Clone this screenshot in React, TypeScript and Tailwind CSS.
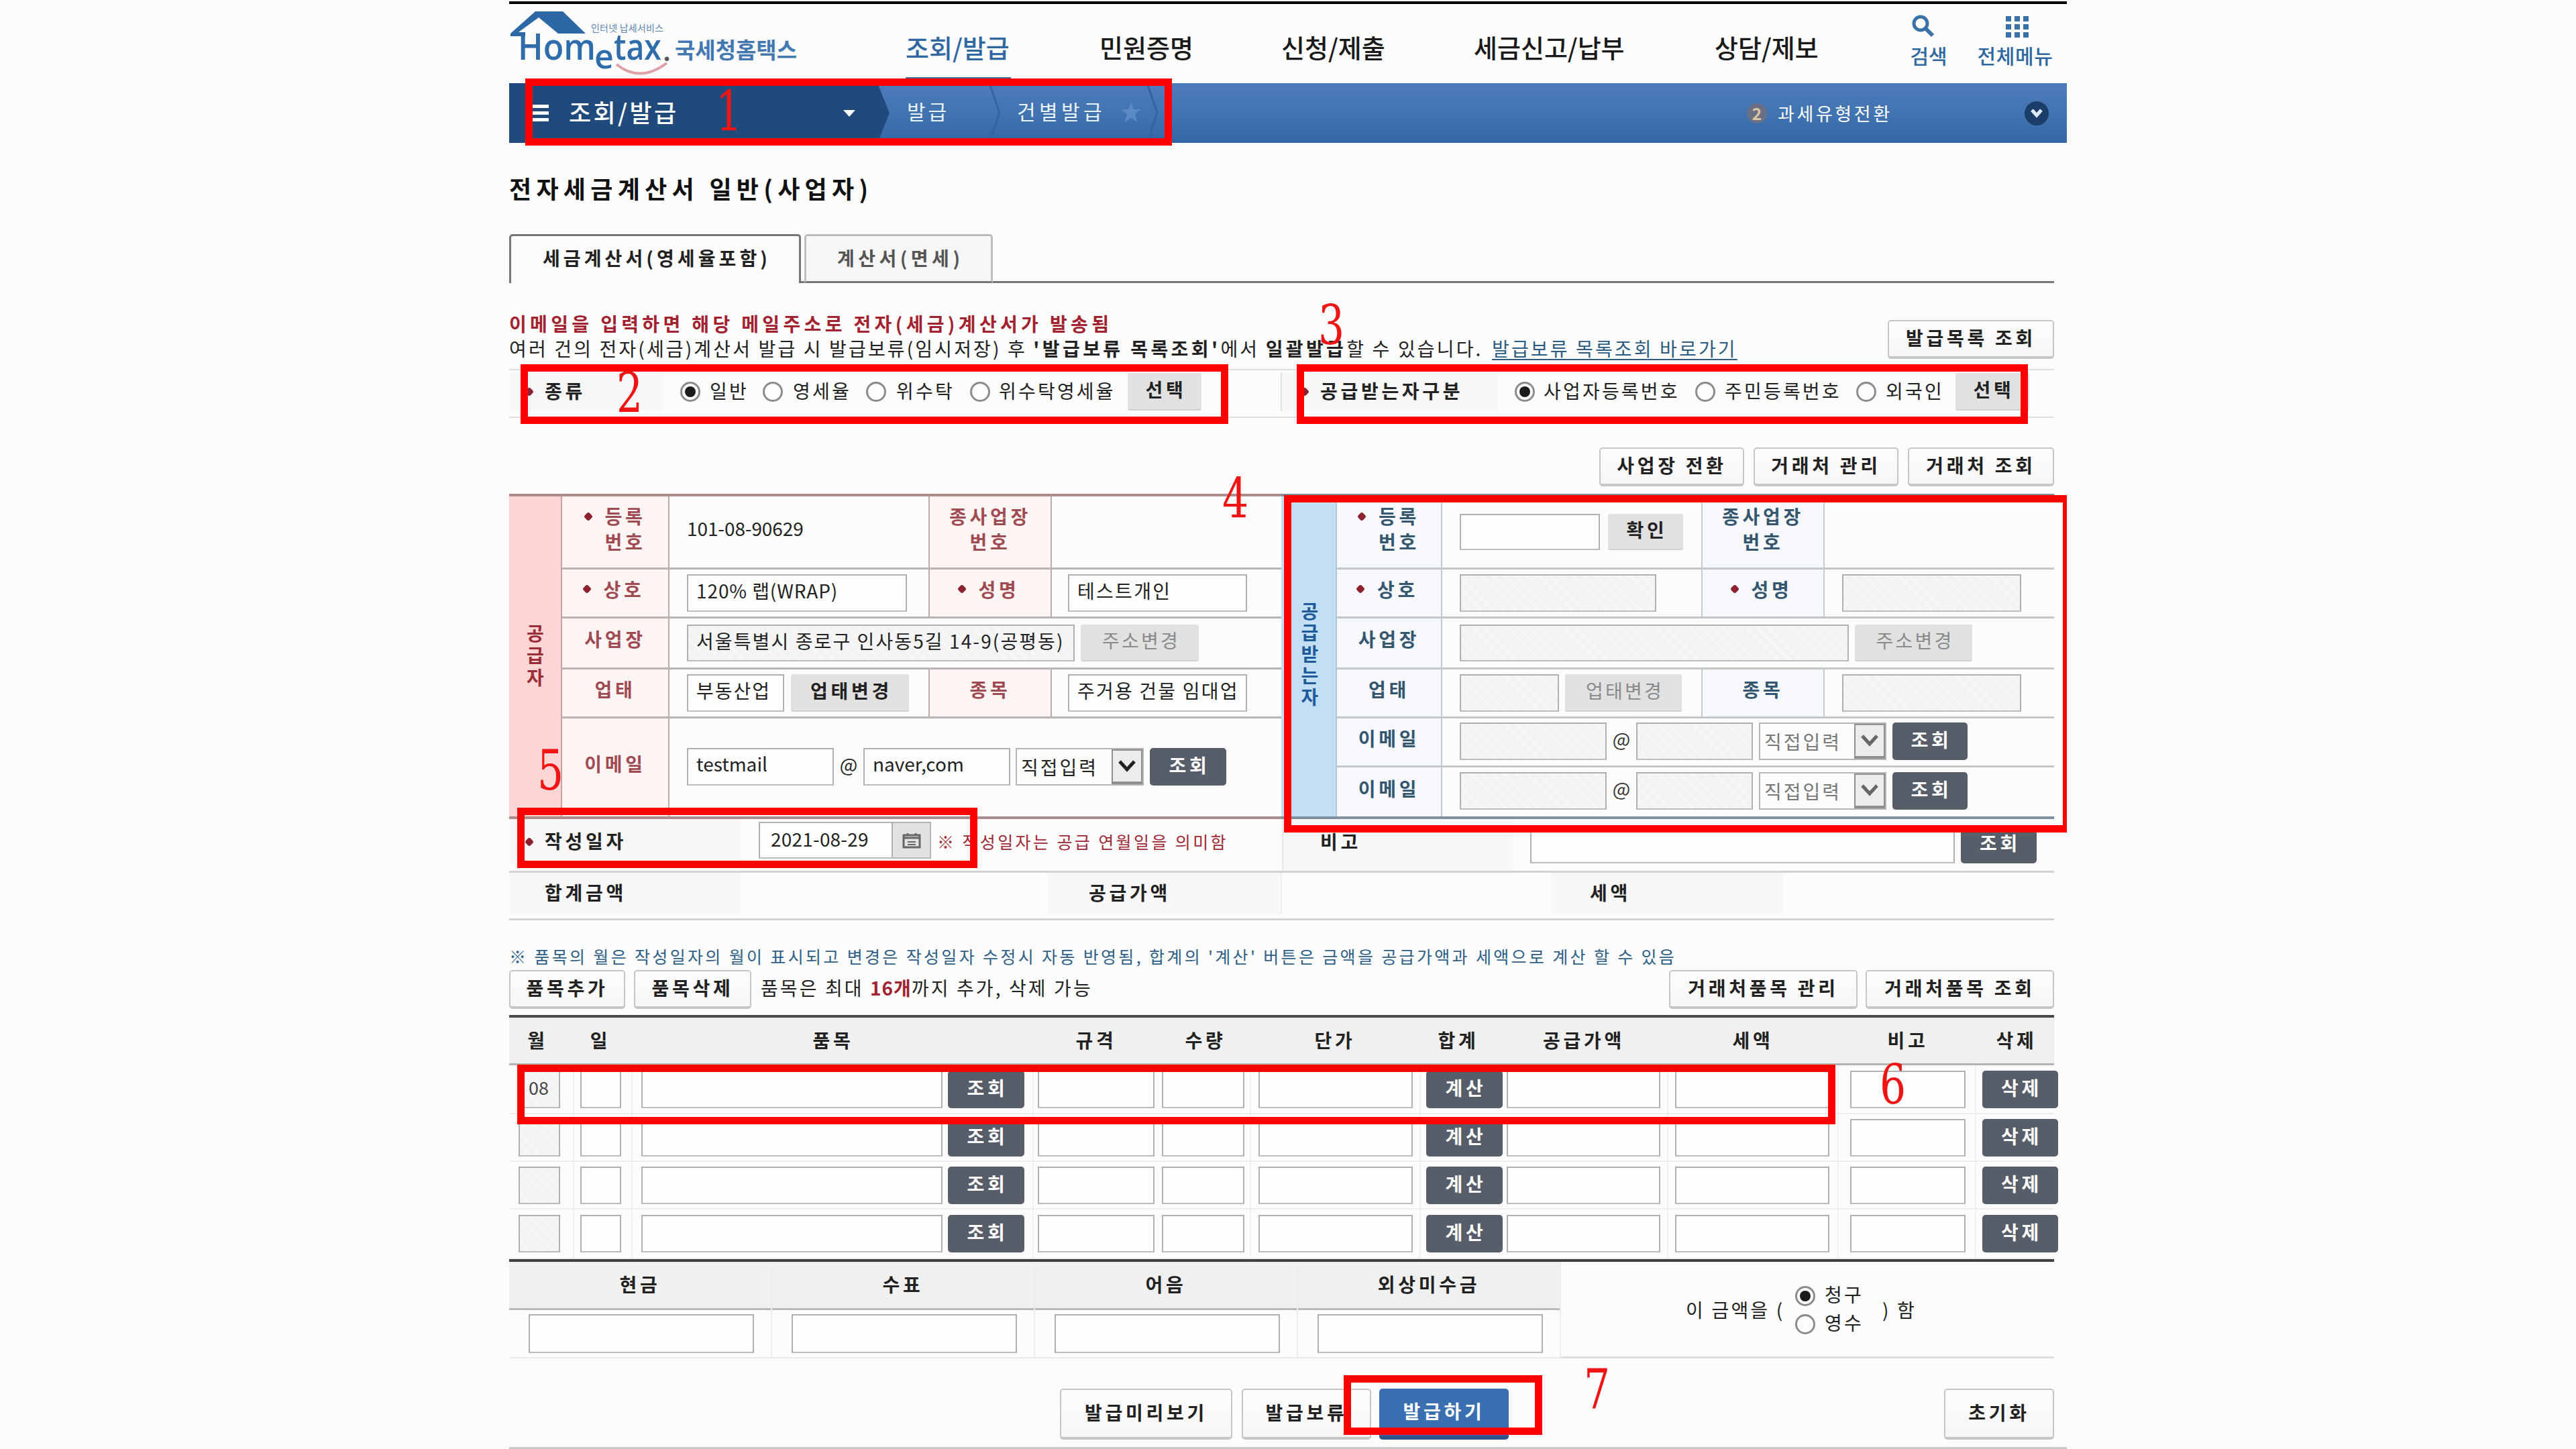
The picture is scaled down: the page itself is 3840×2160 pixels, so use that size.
import React from "react";

const PLAIN = "text-[28px] leading-none tracking-[3.2px] whitespace-nowrap shrink-0 pb-1";
const BOLD = "text-[28px] leading-none tracking-[4.7px] font-bold whitespace-nowrap shrink-0 pb-1";
const HATCH =
  "bg-[repeating-linear-gradient(45deg,#f3f3f3_0px,#f3f3f3_9px,#f8f8f8_9px,#f8f8f8_12px)]";

type P = { className?: string; children?: React.ReactNode };

function Field({ className = "", off = false, children }: P & { off?: boolean }) {
  return (
    <div
      className={`shrink-0 flex items-center overflow-hidden border-2 border-[#b0b0b0] border-b-[#bdbdbd] ${
        off ? HATCH : "bg-[#fefefe]"
      } ${className}`}
    >
      {children}
    </div>
  );
}

function LightButton({ className = "", children }: P) {
  return (
    <button
      className={`shrink-0 flex items-center justify-center rounded-[5px] border-2 border-b-4 border-[#c6c6c6] bg-gradient-to-b from-[#fdfdfd] to-[#f6f6f6] text-[#222] ${BOLD} ${className}`}
    >
      {children}
    </button>
  );
}

function DarkButton({ className = "", children }: P) {
  return (
    <button
      className={`shrink-0 flex items-center justify-center rounded-[5px] bg-[#585d6a] text-white pl-1 ${BOLD} pb-1.5 ${className}`}
    >
      {children}
    </button>
  );
}

function GrayButton({ className = "", off = false, children }: P & { off?: boolean }) {
  return (
    <button
      className={`shrink-0 flex items-center justify-center rounded-[3px] border-b-2 border-[#d0d0d0] bg-[#e1e1e1] pl-1 ${
        off ? `${PLAIN} text-[#8a8a8a]` : `${BOLD} text-[#222]`
      } pb-1.5 ${className}`}
    >
      {children}
    </button>
  );
}

function Radio({ on = false, className = "" }: { on?: boolean; className?: string }) {
  return (
    <span
      className={`shrink-0 flex size-[30px] items-center justify-center rounded-full border-[3px] border-[#8b8b8b] bg-[#fdfdfd] ${className}`}
    >
      {on && <span className="size-[16px] rounded-full bg-[#1c1c1c]" />}
    </span>
  );
}

function Select({ className = "", off = false }: { className?: string; off?: boolean }) {
  return (
    <div className={`shrink-0 flex border-2 border-[#b5b5b5] bg-[#fcfcfc] ${className}`}>
      <span
        className={`flex-1 flex items-center pl-1.5 text-[28px] leading-none tracking-[3px] whitespace-nowrap ${
          off ? "text-[#777]" : "text-[#222]"
        }`}
      >
        직접입력
      </span>
      <span className="w-[46px] flex items-center justify-center border-2 border-b-4 border-[#8f8f8f] bg-[#ececec]">
        <svg width="26" height="18" viewBox="0 0 26 18" fill="none">
          <path d="M2 2 L13 14 L24 2" stroke={off ? "#666" : "#222"} strokeWidth="5" />
        </svg>
      </span>
    </div>
  );
}

function Star({ className = "" }: { className?: string }) {
  return <span className={`shrink-0 size-[10px] rotate-45 rounded-[3px] bg-[#8c2130] ${className}`} />;
}

/* Label cell of the two party tables */
function Label({ blue = false, star = false, className = "", children }: P & { blue?: boolean; star?: boolean }) {
  return (
    <div
      className={`shrink-0 flex items-center justify-center border-r-2 ${
        blue ? "bg-[#f6f8fc] text-[#35566f] border-[#c3cbd3]" : "bg-[#fdf5f4] text-[#a04a52] border-[#c3a9a9]"
      } ${className}`}
    >
      {star && <Star className="mr-[20px] ml-[-4px] mb-1" />}
      <div className="text-center text-[28px] leading-[38px] tracking-[4.7px] font-bold whitespace-nowrap pb-1">{children}</div>
    </div>
  );
}

function Mark({ className = "", children }: P) {
  return (
    <span
      className={`absolute origin-left scale-x-75 font-['DejaVu_Serif',serif] text-[82px] leading-[60px] text-[#f01414] ${className}`}
    >
      {children}
    </span>
  );
}

function Frame({ className = "" }: { className?: string }) {
  return <div className={`absolute border-[11px] border-[#fe0000] ${className}`} />;
}

function Logo() {
  return (
    <svg width="440" height="114" viewBox="0 0 440 114" className="shrink-0">
      <path d="M39 11 L80 11 L114 44 L73 44 L44 20 L14 42 L24 42 L24 48 L2 48 L2 44 Z" fill="#2c67a6" />
      <path d="M160 90 Q195 118 235 88" fill="none" stroke="#dfa0a8" strokeWidth="4" />
      <g fill="#2f6cab" fontWeight="600" className="font-['Open_Sans',sans-serif]">
        <text x="13" y="83" fontSize="54" textLength="116" lengthAdjust="spacingAndGlyphs">Hom</text>
        <text x="127" y="96" fontSize="50">e</text>
        <text x="156" y="83" fontSize="54" textLength="71" lengthAdjust="spacingAndGlyphs">tax</text>
        <text x="229" y="85" fontSize="44" fill="#555">.</text>
      </g>
      <g className="font-['Noto_Sans_CJK_KR',sans-serif]">
        <text x="122" y="41" fontSize="14" fill="#5c86b0" textLength="108">인터넷 납세서비스</text>
        <text x="247" y="81" fontSize="33" fontWeight="700" fill="#4379b0" textLength="182">국세청홈택스</text>
      </g>
    </svg>
  );
}

function Header() {
  const nav = "text-[38px] leading-none font-medium whitespace-nowrap shrink-0 pt-[45px] h-[114px]";
  return (
    <header className="h-[118px] w-[2322px] flex items-start">
      <Logo />
      <span className={`${nav} ml-[151px] w-[157px] text-[#2f68a0] border-b-[5px] border-[#4e6b8c]`}>조회/발급</span>
      <span className={`${nav} ml-[132px] w-[140px] text-[#1a1a1a]`}>민원증명</span>
      <span className={`${nav} ml-[131px] w-[157px] text-[#1a1a1a]`}>신청/제출</span>
      <span className={`${nav} ml-[130px] w-[227px] text-[#1a1a1a]`}>세금신고/납부</span>
      <span className={`${nav} ml-[132px] w-[157px] text-[#1a1a1a]`}>상담/제보</span>
      <div className="ml-[133px] w-[58px] pt-[16px] flex flex-col items-center shrink-0 text-[#2f68a0]">
        <svg width="36" height="34" viewBox="0 0 36 34" fill="none" stroke="#3a72a8" className="mr-[18px]">
          <circle cx="15" cy="13" r="10" strokeWidth="5" />
          <path d="M22 20 L33 31" strokeWidth="6" />
        </svg>
        <span className="mt-[11px] text-[30px] leading-none font-medium whitespace-nowrap">검색</span>
      </div>
      <div className="ml-[43px] w-[114px] pt-[18px] flex flex-col items-center shrink-0 text-[#2f68a0]">
        <div className="ml-[6px] grid grid-cols-3 gap-x-[5px] gap-y-[4px]">
          {Array.from({ length: 9 }, (_, i) => (
            <span key={i} className="size-[8px] bg-[#3a72a8]" />
          ))}
        </div>
        <span className="mt-[11px] text-[30px] leading-none font-medium tracking-[0.6px] whitespace-nowrap">전체메뉴</span>
      </div>
    </header>
  );
}

function MenuBar() {
  return (
    <div className="h-[89px] w-[2322px] shrink-0 flex bg-gradient-to-b from-[#4f7bbb] via-[#4174b0] to-[#3466a8] text-white">
      <div className="w-[567px] shrink-0 flex items-center bg-[#204a7c] [clip-path:polygon(0_0,549px_0,567px_50%,549px_100%,0_100%)]">
        <div className="ml-[35px] w-[24px] flex flex-col gap-[5px]">
          <span className="h-[5px] bg-white" />
          <span className="h-[5px] bg-white" />
          <span className="h-[5px] bg-white" />
        </div>
        <span className="ml-[30px] w-[164px] text-[36px] leading-none font-medium tracking-[3.4px] whitespace-nowrap pb-1.5">조회/발급</span>
        <svg width="20" height="12" viewBox="0 0 20 12" className="ml-[244px]">
          <path d="M1 1 H19 L10 11 Z" fill="#fff" />
        </svg>
      </div>
      <div className="ml-[26px] w-[62px] flex items-center text-[30px] tracking-[4px] whitespace-nowrap pb-1.5 text-[#eaf2fb]">발급</div>
      <svg width="22" height="89" viewBox="0 0 22 89" fill="none" className="ml-[58px]">
        <path d="M3 0 L18 44 L3 89" stroke="#3463a0" strokeWidth="3" />
      </svg>
      <div className="ml-[22px] w-[135px] flex items-center text-[30px] tracking-[5.4px] whitespace-nowrap pb-1.5 text-[#eaf2fb]">건별발급</div>
      <svg width="30" height="89" viewBox="0 0 30 89" className="ml-[20px]">
        <path d="M15 28 L19 39 L30 39 L21 46 L24 58 L15 51 L6 58 L9 46 L0 39 L11 39 Z" fill="#5a89c6" />
      </svg>
      <svg width="22" height="89" viewBox="0 0 22 89" fill="none" className="ml-[6px]">
        <path d="M3 0 L18 44 L3 89" stroke="#3463a0" strokeWidth="3" />
      </svg>
      <div className="ml-[875px] flex items-center">
        <span className="flex size-[30px] items-center justify-center rounded-full bg-[#6b6f86] text-[25px] leading-none font-bold text-[#dcc3a2]">2</span>
        <span className="ml-[16px] w-[170px] text-[27px] leading-none tracking-[3.6px] whitespace-nowrap">과세유형전환</span>
        <span className="ml-[198px] flex size-[36px] items-center justify-center rounded-full bg-[#1b3d69]">
          <svg width="20" height="14" viewBox="0 0 20 14" fill="none">
            <path d="M3 2 L10 10 L17 2" stroke="#dfe9f5" strokeWidth="5" />
          </svg>
        </span>
      </div>
    </div>
  );
}

function KindRow() {
  return (
    <div className="mt-[12px] h-[73px] w-[2303px] shrink-0 flex items-center border-y-2 border-[#dedede] pb-[5px] text-[#222]">
      <div className="w-[230px] h-[56px] shrink-0 flex items-center bg-[#f7f7f7]">
        <Star className="ml-[25px]" />
        <span className={`ml-[18px] ${BOLD}`}>종류</span>
      </div>
      <Radio on className="ml-[25px]" />
      <span className={`ml-[14px] w-[55px] ${PLAIN}`}>일반</span>
      <Radio className="ml-[24px]" />
      <span className={`ml-[15px] w-[84px] ${PLAIN}`}>영세율</span>
      <Radio className="ml-[25px]" />
      <span className={`ml-[15px] w-[84px] ${PLAIN}`}>위수탁</span>
      <Radio className="ml-[26px]" />
      <span className={`ml-[13px] w-[172px] ${PLAIN}`}>위수탁영세율</span>
      <GrayButton className="ml-[20px] w-[110px] h-[56px]">선택</GrayButton>
      <div className="ml-[118px] w-[324px] h-[58px] shrink-0 flex items-center border-l-2 border-[#e3e3e3] bg-[#f7f7f7]">
        <Star className="ml-[29px]" />
        <span className={`ml-[18px] ${BOLD}`}>공급받는자구분</span>
      </div>
      <Radio on className="ml-[25px]" />
      <span className={`ml-[13px] w-[203px] ${PLAIN}`}>사업자등록번호</span>
      <Radio className="ml-[23px]" />
      <span className={`ml-[14px] w-[172px] ${PLAIN}`}>주민등록번호</span>
      <Radio className="ml-[24px]" />
      <span className={`ml-[14px] w-[84px] ${PLAIN}`}>외국인</span>
      <GrayButton className="ml-[20px] w-[110px] h-[56px]">선택</GrayButton>
    </div>
  );
}

function Supplier() {
  const line = "flex border-b-[3px] border-[#b9b3b3]";
  const value = "text-[28px] leading-none whitespace-nowrap pb-2";
  return (
    <section className="w-[1151px] h-[485px] flex border-y-4 border-[#ad8b8b] text-[#222]">
      <div className="w-[79px] pl-[3px] shrink-0 flex items-center justify-center border-r-2 border-[#cf9f9f] bg-[#fbd6d4] text-[28px] font-bold text-[#9b2c38]">
        <div className="w-[28px] break-all leading-[33px] pb-1">공급자</div>
      </div>
      <div className="flex-1 flex flex-col">
        <div className={`${line} h-[109px]`}>
          <Label className="w-[160px] pb-[6px]"><div className="flex items-start"><Star className="mt-[15px] mr-[20px]" /><span>등록<br />번호</span></div></Label>
          <div className="w-[386px] shrink-0 flex items-center pl-[26px] pb-[12px]"><span className="text-[28px] leading-none tracking-[-0.1px] whitespace-nowrap">101-08-90629</span></div>
          <Label className="w-[184px] border-l-2 pb-[6px]">종사업장<br />번호</Label>
        </div>
        <div className={`${line} h-[73px] items-stretch`}>
          <Label star className="w-[160px] pb-[8px]">상호</Label>
          <div className="w-[386px] shrink-0 flex items-center pl-[26px]"><Field className="w-[328px] h-[56px] pl-[12px]"><span className={`${value} tracking-[0.9px]`}>120% 랩(WRAP)</span></Field></div>
          <Label star className="w-[184px] border-l-2 pb-[8px]">성명</Label>
          <div className="flex items-center pl-[24px]"><Field className="w-[267px] h-[56px] pl-[12px]"><span className={`${value} tracking-[2.3px]`}>테스트개인</span></Field></div>
        </div>
        <div className={`${line} h-[76px] items-stretch`}>
          <Label className="w-[160px] pb-[10px]">사업장</Label>
          <div className="flex items-center pl-[26px]">
            <Field off className="w-[578px] h-[55px] pl-[12px]"><span className={`${value} tracking-[2.1px]`}>서울특별시 종로구 인사동5길 14-9(공평동)</span></Field>
            <GrayButton off className="ml-[9px] w-[176px] h-[55px] pb-2">주소변경</GrayButton>
          </div>
        </div>
        <div className={`${line} h-[73px] items-stretch`}>
          <Label className="w-[160px] pb-[8px]">업태</Label>
          <div className="w-[386px] shrink-0 flex items-center pl-[26px]">
            <Field className="w-[145px] h-[56px] pl-[12px]"><span className={`${value} tracking-[2px]`}>부동산업</span></Field>
            <GrayButton className="ml-[10px] w-[176px] h-[56px]">업태변경</GrayButton>
          </div>
          <Label className="w-[184px] border-l-2 pb-[8px]">종목</Label>
          <div className="flex items-center pl-[24px]"><Field className="w-[267px] h-[56px] pl-[12px] pr-[8px]"><span className={`${value} tracking-[2.2px]`}>주거용 건물 임대업</span></Field></div>
        </div>
        <div className="flex flex-1">
          <Label className="w-[160px] pb-[8px]">이메일</Label>
          <div className="flex items-center pl-[26px] text-[28px] leading-none pb-[3px]">
            <Field className="w-[219px] h-[56px] pl-[12px] pb-2.5">testmail</Field>
            <span className="w-[44px] text-center pb-2">@</span>
            <Field className="w-[219px] h-[56px] pl-[12px] pb-2.5">naver,com</Field>
            <Select className="ml-[8px] w-[191px] h-[56px]" />
            <DarkButton className="ml-[9px] w-[114px] h-[56px]">조회</DarkButton>
          </div>
        </div>
      </div>
    </section>
  );
}

function Receiver() {
  const line = "flex border-b-[3px] border-[#c2c7ca]";
  const mail = (
    <div className="flex items-center pl-[26px] text-[28px] leading-none text-[#333] pb-[3px]">
      <Field off className="w-[219px] h-[56px]" />
      <span className="w-[44px] text-center pb-2">@</span>
      <Field off className="w-[174px] h-[56px]" />
      <Select off className="ml-[9px] w-[190px] h-[56px]" />
      <DarkButton className="ml-[9px] w-[112px] h-[56px] text-[#cfd2d8]">조회</DarkButton>
    </div>
  );
  return (
    <section className="w-[1152px] h-[485px] flex border-y-4 border-[#7d929e] text-[#222]">
      <div className="w-[83px] pl-[6px] shrink-0 flex items-center justify-center border-r-2 border-[#a9c9e4] bg-[#c2dff5] text-[28px] font-bold text-[#1f5a9a]">
        <div className="w-[28px] break-all leading-[32px] pb-[10px]">공급받는자</div>
      </div>
      <div className="flex-1 flex flex-col">
        <div className={`${line} h-[109px]`}>
          <Label blue className="w-[157px] pb-[6px]"><div className="flex items-start"><Star className="mt-[15px] mr-[20px]" /><span>등록<br />번호</span></div></Label>
          <div className="w-[386px] shrink-0 flex items-center pl-[26px]">
            <Field className="w-[209px] h-[54px]" />
            <GrayButton className="ml-[12px] w-[112px] h-[54px]">확인</GrayButton>
          </div>
          <Label blue className="w-[184px] border-l-2 pb-[6px]">종사업장<br />번호</Label>
        </div>
        <div className={`${line} h-[73px]`}>
          <Label blue star className="w-[157px] pb-[8px]">상호</Label>
          <div className="w-[386px] shrink-0 flex items-center pl-[26px]"><Field off className="w-[293px] h-[56px]" /></div>
          <Label blue star className="w-[184px] border-l-2 pb-[8px]">성명</Label>
          <div className="flex items-center pl-[26px]"><Field off className="w-[267px] h-[56px]" /></div>
        </div>
        <div className={`${line} h-[76px]`}>
          <Label blue className="w-[157px] pb-[10px]">사업장</Label>
          <div className="flex items-center pl-[26px]">
            <Field off className="w-[580px] h-[55px]" />
            <GrayButton off className="ml-[9px] w-[175px] h-[55px] pb-2">주소변경</GrayButton>
          </div>
        </div>
        <div className={`${line} h-[73px]`}>
          <Label blue className="w-[157px] pb-[8px]">업태</Label>
          <div className="w-[386px] shrink-0 flex items-center pl-[26px]">
            <Field off className="w-[148px] h-[56px]" />
            <GrayButton off className="ml-[9px] w-[174px] h-[56px]">업태변경</GrayButton>
          </div>
          <Label blue className="w-[184px] border-l-2 pb-[8px]">종목</Label>
          <div className="flex items-center pl-[26px]"><Field off className="w-[267px] h-[56px]" /></div>
        </div>
        <div className={`${line} h-[73px]`}>
          <Label blue className="w-[157px] pb-[8px]">이메일</Label>
          {mail}
        </div>
        <div className="flex flex-1">
          <Label blue className="w-[157px] pb-[8px]">이메일</Label>
          {mail}
        </div>
      </div>
    </section>
  );
}

function DateRows() {
  return (
    <div className="w-[2303px] shrink-0 text-[#222]">
      <div className="h-[80px] flex border-b-[3px] border-[#d2d2d2]">
        <div className="w-[345px] h-[68px] shrink-0 flex items-center bg-[#f7f7f7]">
          <Star className="ml-[25px]" />
          <span className={`ml-[18px] ${BOLD}`}>작성일자</span>
        </div>
        <Field className="ml-[27px] mt-[4px] w-[200px] h-[55px] pl-[16px] pb-1.5"><span className="text-[28px] leading-none tracking-[0.2px] whitespace-nowrap">2021-08-29</span></Field>
        <div className="mt-[4px] w-[57px] h-[55px] shrink-0 flex items-center justify-center border-2 border-l-0 border-[#b5b5b5] bg-[#e2e2e2]">
          <svg width="28" height="24" viewBox="0 0 28 24" fill="none" stroke="#666" strokeWidth="3">
            <rect x="2" y="4" width="24" height="18" />
            <path d="M2 8 H26 M8 1 V5 M20 1 V5" />
            <path d="M8 14 H20 M8 18 H20" strokeWidth="2" />
          </svg>
        </div>
        <span className="ml-[9px] mt-[21px] w-[430px] shrink-0 text-[25px] leading-none tracking-[3.4px] whitespace-nowrap text-[#a12836]">※ 작성일자는 공급 연월일을 의미함</span>
        <div className="ml-[84px] w-[344px] h-[77px] shrink-0 flex items-center border-l-2 border-[#e8e8e8] bg-[#f7f7f7]">
          <span className={`ml-[55px] mb-[8px] ${BOLD}`}>비고</span>
        </div>
        <Field className="ml-[26px] mt-[10px] w-[633px] h-[56px]" />
        <DarkButton className="ml-[9px] mt-[10px] w-[113px] h-[56px]">조회</DarkButton>
      </div>
      <div className="h-[71px] flex border-b-[3px] border-[#d2d2d2]">
        <div className={`w-[345px] h-[62px] flex items-center bg-[#f7f7f7] pl-[53px] ${BOLD}`}>합계금액</div>
        <div className={`ml-[458px] w-[349px] h-[62px] flex items-center bg-[#f7f7f7] pl-[61px] border-r-2 border-[#ececec] ${BOLD}`}>공급가액</div>
        <div className={`ml-[402px] w-[345px] h-[62px] flex items-center bg-[#f7f7f7] pl-[57px] ${BOLD}`}>세액</div>
      </div>
    </div>
  );
}

const ROWS = [
  { month: "08", h: "h-[73px]" },
  { month: "", h: "h-[71px]" },
  { month: "", h: "h-[71px]" },
  { month: "", h: "h-[74px]" },
];

function Items() {
  const th = "text-center text-[28px] leading-none tracking-[4.7px] font-bold whitespace-nowrap shrink-0 pb-0.5 text-[#222]";
  return (
    <div className="shrink-0">
      <div className="w-[2303px] h-[75px] flex items-center border-t-4 border-b-[3px] border-t-[#4a4a4a] border-b-[#b3b3b3] bg-[#f0f0f0]">
        <span className={`${th} w-[85px]`}>월</span>
        <span className={`${th} w-[102px]`}>일</span>
        <span className={`${th} w-[592px]`}>품목</span>
        <span className={`${th} w-[192px]`}>규격</span>
        <span className={`${th} w-[134px]`}>수량</span>
        <span className={`${th} w-[252px]`}>단가</span>
        <span className={`${th} w-[116px]`}>합계</span>
        <span className={`${th} w-[258px]`}>공급가액</span>
        <span className={`${th} w-[246px]`}>세액</span>
        <span className={`${th} w-[216px]`}>비고</span>
        <span className={`${th} w-[108px]`}>삭제</span>
      </div>
      <div className="w-[2322px]">
        {ROWS.map((r, i) => (
          <div key={i} className={`${r.h} flex items-center w-[2311px]`}>
            <div className="flex h-full w-[2303px] items-center border-b-2 border-[#ececec]">
              <Field off className="ml-[14px] w-[62px] h-[56px] pl-[13px] pb-1.5"><span className="text-[27px] leading-none text-[#444]">{r.month}</span></Field>
              <div className="ml-[19px] h-full w-[11px] shrink-0 border-l-2 border-[#f0f0f0]" />
              <Field className="w-[61px] h-[56px]" />
              <div className="ml-[15px] h-full w-[15px] shrink-0 border-l-2 border-[#f0f0f0]" />
              <Field className="w-[449px] h-[56px]" />
              <DarkButton className="ml-[8px] w-[114px] h-[56px]">조회</DarkButton>
              <div className="ml-[12px] h-full w-[8px] shrink-0 border-l-2 border-[#f0f0f0]" />
              <Field className="w-[174px] h-[56px]" />
              <Field className="ml-[11px] w-[123px] h-[56px]" />
              <div className="ml-[8px] h-full w-[13px] shrink-0 border-l-2 border-[#f0f0f0]" />
              <Field className="w-[230px] h-[56px]" />
              <div className="ml-[10px] h-full w-[10px] shrink-0 border-l-2 border-[#f0f0f0]" />
              <DarkButton className="w-[114px] h-[56px]">계산</DarkButton>
              <Field className="ml-[6px] w-[229px] h-[56px]" />
              <div className="ml-[10px] h-full w-[12px] shrink-0 border-l-2 border-[#f0f0f0]" />
              <Field className="w-[230px] h-[56px]" />
              <div className="ml-[12px] h-full w-[19px] shrink-0 border-l-2 border-[#f0f0f0]" />
              <Field className="w-[172px] h-[56px]" />
              <div className="ml-[14px] h-full w-[11px] shrink-0 border-l-2 border-[#f0f0f0]" />
              <DarkButton className="w-[113px] h-[56px]">삭제</DarkButton>
            </div>
          </div>
        ))}
      </div>
    </div>
  );
}

function Payment() {
  const cells = ["현금", "수표", "어음", "외상미수금"];
  return (
    <div className="w-[2303px] h-[148px] shrink-0 flex border-t-4 border-[#3f3f3f]">
      <div className="w-[1568px] flex">
        {cells.map((c) => (
          <div key={c} className="w-[392px] flex flex-col border-r-2 border-b-2 border-[#ececec]">
            <div className="h-[72px] flex items-center justify-center border-b-[3px] border-[#b9b9b9] bg-[#f0f0f0] pb-1 text-[28px] leading-none tracking-[4.7px] font-bold text-[#222]">{c}</div>
            <div className="flex-1 flex items-center justify-center pl-1">
              <Field className="w-[336px] h-[58px]" />
            </div>
          </div>
        ))}
      </div>
      <div className="flex-1 flex items-center border-b-[3px] border-[#dedede] text-[#222]">
        <span className="ml-[186px] w-[146px] shrink-0 text-[28px] leading-none tracking-[3.2px] whitespace-nowrap">이 금액을 (</span>
        <div className="ml-[17px] flex flex-col gap-[10px]">
          <div className="flex items-center"><Radio on className="mt-0.5" /><span className={`ml-[14px] ${PLAIN} pb-0.5`}>청구</span></div>
          <div className="flex items-center"><Radio className="mt-0.5" /><span className={`ml-[14px] ${PLAIN} pb-0.5`}>영수</span></div>
        </div>
        <span className="ml-[28px] shrink-0 text-[28px] leading-none tracking-[3.2px] whitespace-nowrap">) 함</span>
      </div>
    </div>
  );
}

export default function App() {
  return (
    <div className="w-[3840px] h-[2160px] overflow-hidden bg-[#fcfcfc] font-['Noto_Sans_CJK_KR','Noto_Sans',sans-serif]">
      <main className="relative ml-[759px] w-[2322px] h-[2160px] flex flex-col overflow-hidden pt-[2px]">
        <div className="h-[4px] shrink-0 bg-black" />
        <Header />
        <MenuBar />
        <h1 className="mt-[49px] h-[38px] shrink-0 text-[36px] leading-none font-semibold tracking-[7.3px] whitespace-nowrap text-[#111]">전자세금계산서 일반(사업자)</h1>

        <div className="mt-[49px] h-[73px] w-[2303px] shrink-0 flex">
          <div className="w-[435px] flex items-center pl-[47px] pb-1.5 rounded-t-[5px] border-[3px] border-b-0 border-[#777] text-[28px] leading-none tracking-[5.1px] font-bold whitespace-nowrap text-[#222]">세금계산서(영세율포함)</div>
          <div className="w-[5px] border-b-[3px] border-[#777]" />
          <div className="w-[281px] flex items-center pl-[46px] pb-1 rounded-t-[5px] border-[3px] border-[#bdbdbd] border-b-[#777] bg-[#f6f6f6] text-[28px] leading-none tracking-[5.5px] font-bold whitespace-nowrap text-[#555]">계산서(면세)</div>
          <div className="flex-1 border-b-[3px] border-[#777]" />
        </div>

        <div className="mt-[43px] h-[73px] w-[2303px] shrink-0 flex justify-between">
          <div className="flex flex-col pt-[3px]">
            <p className="text-[28px] leading-none tracking-[5.35px] font-bold whitespace-nowrap text-[#a3222f]">이메일을 입력하면 해당 메일주소로 전자(세금)계산서가 발송됨</p>
            <p className="mt-[9px] text-[28px] leading-none tracking-[3.15px] whitespace-nowrap text-[#222]">
              여러 건의 전자(세금)계산서 발급 시 발급보류(임시저장) 후 <b className="tracking-[4.4px]">'발급보류 목록조회'</b>에서 <b className="tracking-[4.4px]">일괄발급</b>할 수 있습니다.{" "}
              <a className="ml-[4px] text-[#2d5c80] underline underline-offset-4">발급보류 목록조회 바로가기</a>
            </p>
          </div>
          <LightButton className="mt-[12px] w-[248px] h-[58px]">발급목록 조회</LightButton>
        </div>

        <KindRow />

        <div className="mt-[44px] w-[2303px] h-[58px] shrink-0 flex justify-end gap-[14px]">
          <LightButton className="w-[216px]">사업장 전환</LightButton>
          <LightButton className="w-[216px]">거래처 관리</LightButton>
          <LightButton className="w-[218px]">거래처 조회</LightButton>
        </div>

        <div className="mt-[11px] flex shrink-0">
          <Supplier />
          <Receiver />
        </div>

        <DateRows />

        <p className="mt-[41px] h-[26px] shrink-0 text-[25px] leading-none tracking-[3.35px] whitespace-nowrap text-[#2f5f86]">
          ※ 품목의 월은 작성일자의 월이 표시되고 변경은 작성일자 수정시 자동 반영됨, 합계의 '계산' 버튼은 금액을 공급가액과 세액으로 계산 할 수 있음
        </p>

        <div className="mt-[7px] w-[2303px] h-[58px] shrink-0 flex items-stretch text-[#222]">
          <LightButton className="w-[173px]">품목추가</LightButton>
          <LightButton className="ml-[13px] w-[175px]">품목삭제</LightButton>
          <span className="ml-[14px] self-center mb-[6px] text-[28px] leading-none tracking-[3.1px] whitespace-nowrap">품목은 최대 <b className="text-[#a3222f] tracking-[1px]">16개</b>까지 추가, 삭제 가능</span>
          <LightButton className="ml-auto w-[281px]">거래처품목 관리</LightButton>
          <LightButton className="ml-[12px] w-[281px]">거래처품목 조회</LightButton>
        </div>

        <div className="mt-[9px] shrink-0">
          <Items />
        </div>
        <Payment />

        <div className="mt-[45px] w-[2303px] h-[76px] shrink-0 flex">
          <LightButton className="ml-[821px] w-[257px] to-[#ebebeb]">발급미리보기</LightButton>
          <LightButton className="ml-[14px] w-[193px] to-[#ebebeb]">발급보류</LightButton>
          <button className={`ml-[12px] w-[193px] shrink-0 flex items-center justify-center rounded-[5px] border-b-[6px] border-[#2c5488] bg-[#3a6fb2] text-white ${BOLD}`}>발급하기</button>
          <LightButton className="ml-auto w-[164px]">초기화</LightButton>
        </div>
        <div className="mt-auto h-[3px] shrink-0 bg-[#c9c9c9]" />

        <Frame className="left-[24px] top-[117px] w-[964px] h-[100px]" />
        <Frame className="left-[17px] top-[543px] w-[1055px] h-[89px]" />
        <Frame className="left-[1174px] top-[543px] w-[1090px] h-[89px]" />
        <Frame className="left-[1155px] top-[738px] w-[1167px] h-[503px] border-r-[6px]" />
        <Frame className="left-[12px] top-[1204px] w-[686px] h-[90px]" />
        <Frame className="left-[12px] top-[1587px] w-[1965px] h-[89px]" />
        <Frame className="left-[1244px] top-[2050px] w-[296px] h-[89px]" />

        <Mark className="left-[308px] top-[137px]">1</Mark>
        <Mark className="left-[160px] top-[557px]">2</Mark>
        <Mark className="left-[1206px] top-[456px]">3</Mark>
        <Mark className="left-[1063px] top-[714px]">4</Mark>
        <Mark className="left-[42px] top-[1119px]">5</Mark>
        <Mark className="left-[2043px] top-[1588px]">6</Mark>
        <Mark className="left-[1602px] top-[2042px]">7</Mark>
      </main>
    </div>
  );
}
